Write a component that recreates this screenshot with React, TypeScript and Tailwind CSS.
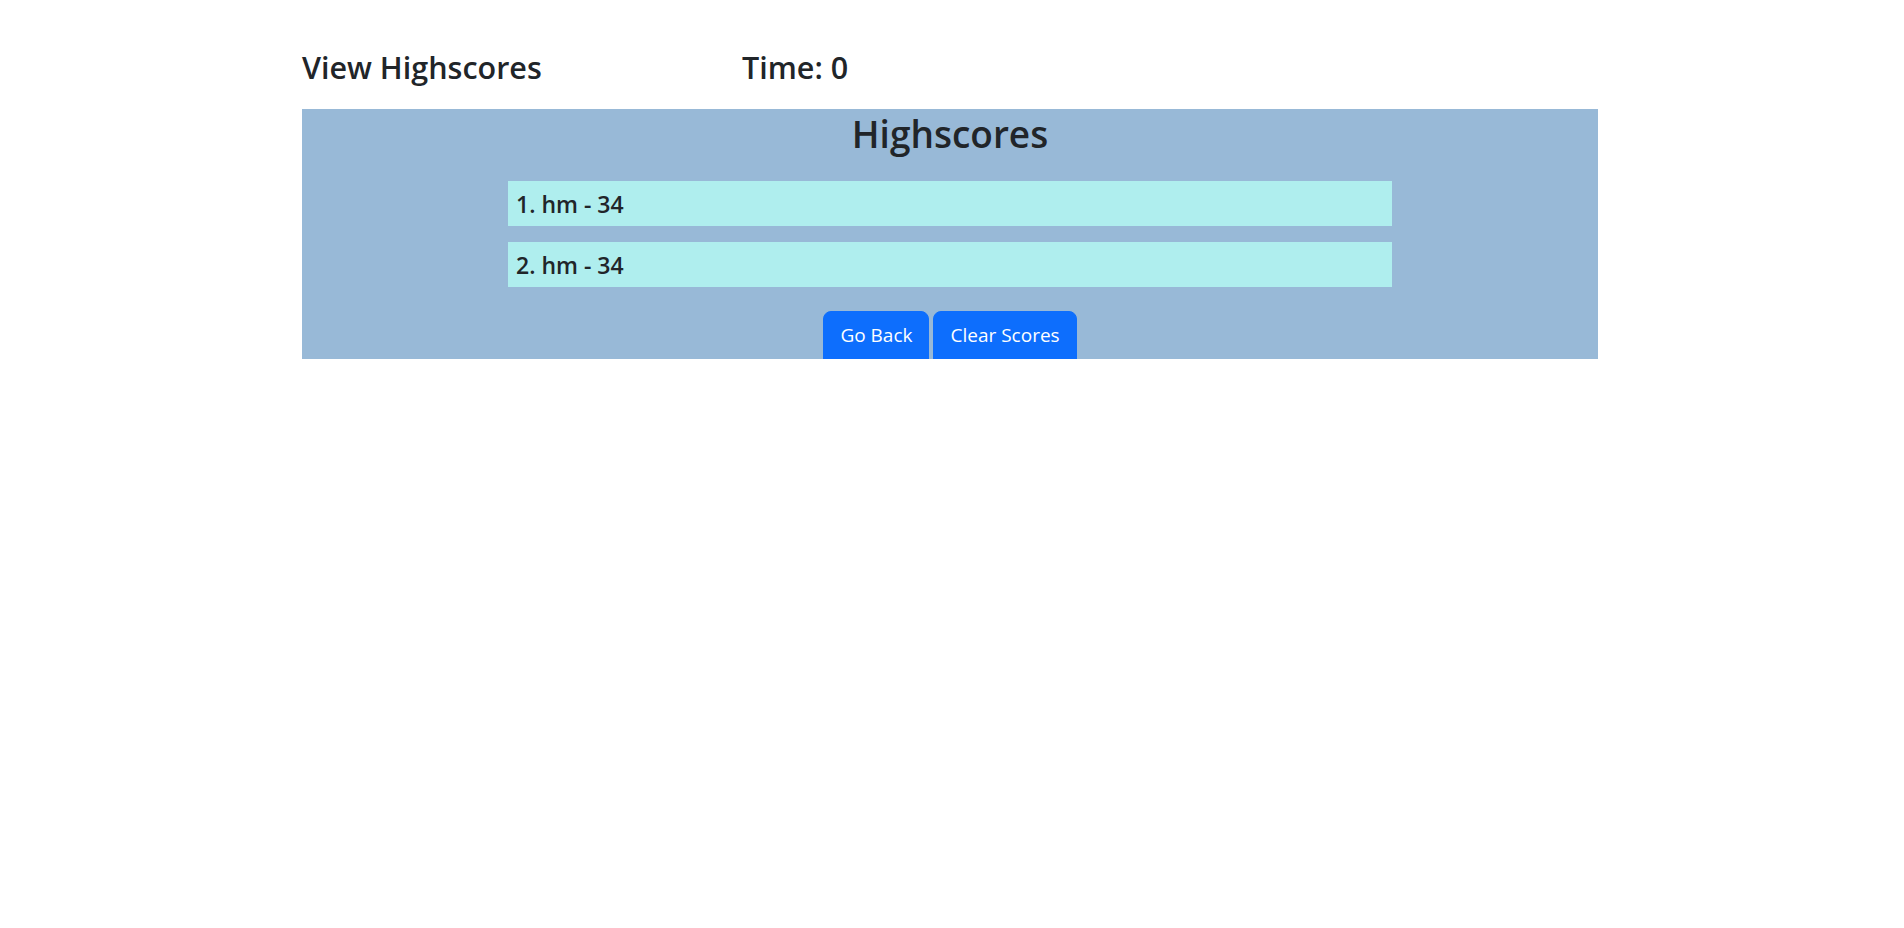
import React from "react";

export default function App() {
  const scores = ["1. hm - 34", "2. hm - 34"];
  return (
    <div className="min-h-[928px] bg-white text-[#212529] font-['Open_Sans',sans-serif]">
      <div className="mx-auto w-[1300px] pt-[47px]">
        <div className="flex mb-[22px]">
          <h2 className="w-[440px] text-[30.5px] leading-[40px] font-semibold">View Highscores</h2>
          <h2 className="text-[30.5px] leading-[40px] font-semibold">Time: 0</h2>
        </div>
        <div className="w-[1296px] h-[250px] overflow-hidden bg-[#98b9d7]">
          <h1 className="pt-px text-center text-[37px] leading-[47px] font-semibold">Highscores</h1>
          <ul className="mt-[24px] mx-auto w-[884px] flex flex-col gap-4">
            {scores.map((s) => (
              <li key={s} className="h-[45px] bg-[#afeeee] px-2 pt-[9px] pb-[7px] text-[23px] leading-[29px] font-semibold">
                {s}
              </li>
            ))}
          </ul>
          <div className="mt-[24px] flex justify-center gap-1">
            <button className="h-[56px] rounded-lg border border-[#0d6efd] bg-[#0d6efd] px-4 pt-[8px] pb-[16px] text-[19px] leading-[30px] text-white self-start">
              Go Back
            </button>
            <button className="h-[56px] rounded-lg border border-[#0d6efd] bg-[#0d6efd] px-4 pt-[8px] pb-[16px] text-[19px] leading-[30px] text-white self-start">
              Clear Scores
            </button>
          </div>
        </div>
      </div>
    </div>
  );
}
